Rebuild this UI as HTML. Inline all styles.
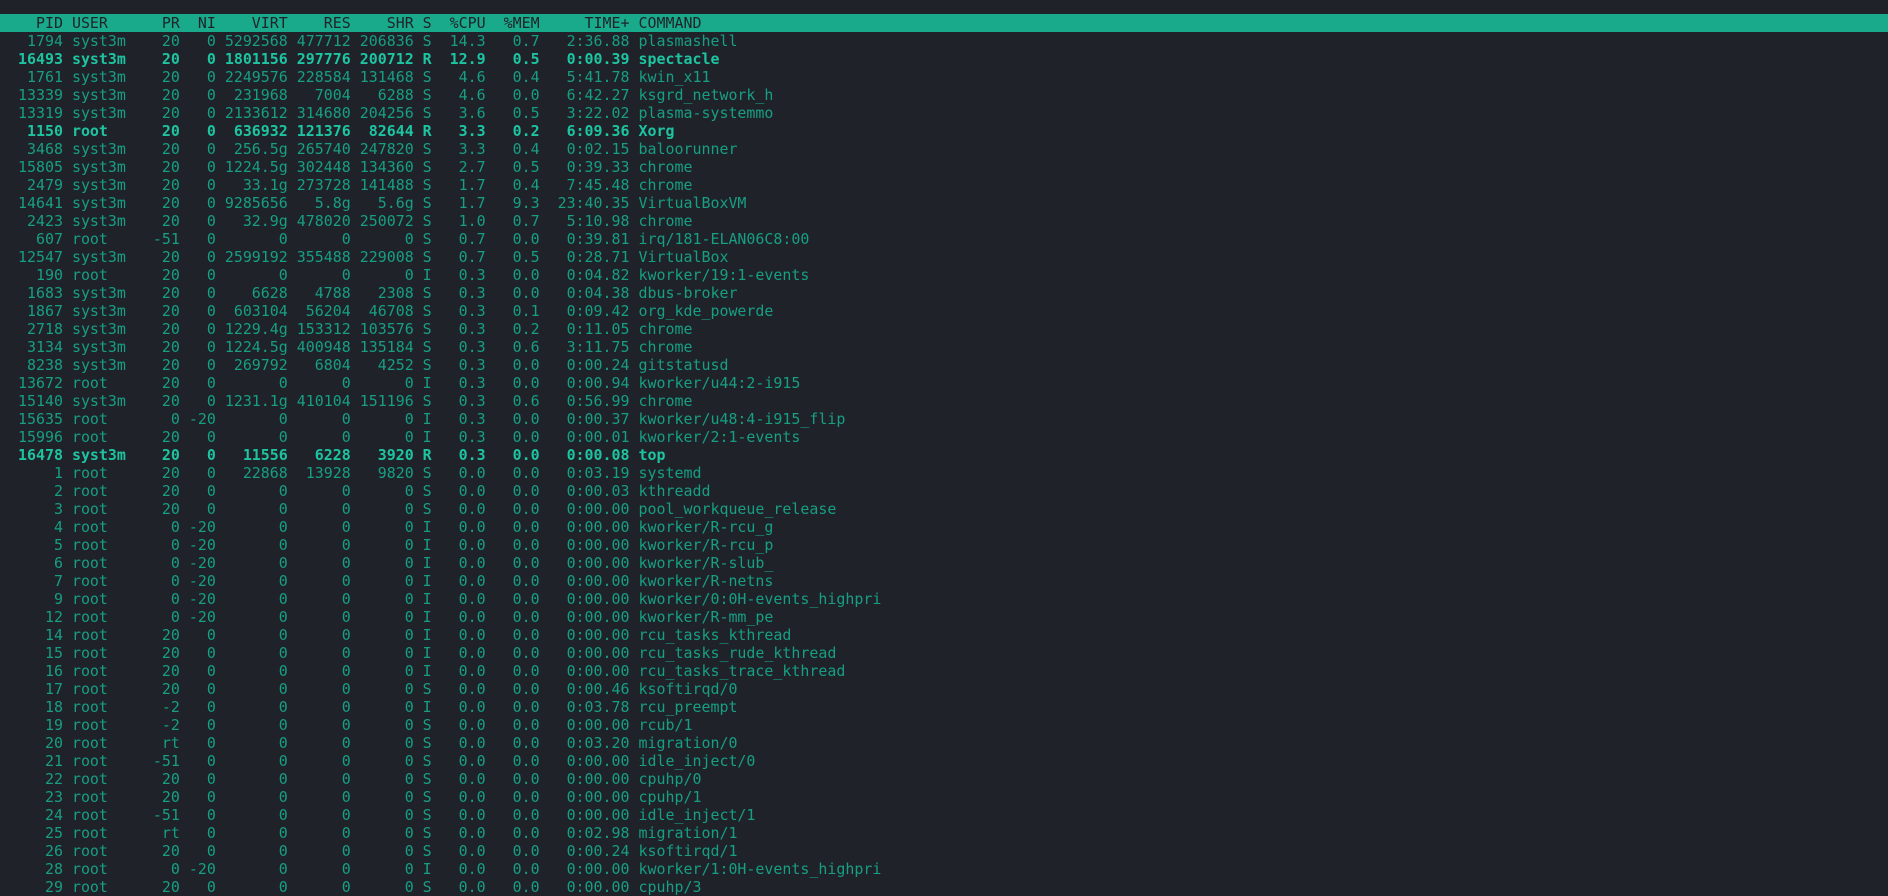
<!DOCTYPE html>
<html><head><meta charset="utf-8"><style>
html,body{margin:0;padding:0;background:#1f2329;width:1888px;height:893px;overflow:hidden}
pre{margin:0;position:absolute;left:0;top:14px;font-family:"DejaVu Sans Mono","Liberation Mono",monospace;font-size:14.94px;line-height:18px;color:#179e83;white-space:pre}
.h{background:#19a98b;color:#1f2329;display:block;width:1888px}
b{color:#1ec4a1;font-weight:bold}
</style></head><body><pre><span class="h">    PID USER      PR  NI    VIRT    RES    SHR S  %CPU  %MEM     TIME+ COMMAND</span>   1794 syst3m    20   0 5292568 477712 206836 S  14.3   0.7   2:36.88 plasmashell
<b>  16493 syst3m    20   0 1801156 297776 200712 R  12.9   0.5   0:00.39 spectacle</b>
   1761 syst3m    20   0 2249576 228584 131468 S   4.6   0.4   5:41.78 kwin_x11
  13339 syst3m    20   0  231968   7004   6288 S   4.6   0.0   6:42.27 ksgrd_network_h
  13319 syst3m    20   0 2133612 314680 204256 S   3.6   0.5   3:22.02 plasma-systemmo
<b>   1150 root      20   0  636932 121376  82644 R   3.3   0.2   6:09.36 Xorg</b>
   3468 syst3m    20   0  256.5g 265740 247820 S   3.3   0.4   0:02.15 baloorunner
  15805 syst3m    20   0 1224.5g 302448 134360 S   2.7   0.5   0:39.33 chrome
   2479 syst3m    20   0   33.1g 273728 141488 S   1.7   0.4   7:45.48 chrome
  14641 syst3m    20   0 9285656   5.8g   5.6g S   1.7   9.3  23:40.35 VirtualBoxVM
   2423 syst3m    20   0   32.9g 478020 250072 S   1.0   0.7   5:10.98 chrome
    607 root     -51   0       0      0      0 S   0.7   0.0   0:39.81 irq/181-ELAN06C8:00
  12547 syst3m    20   0 2599192 355488 229008 S   0.7   0.5   0:28.71 VirtualBox
    190 root      20   0       0      0      0 I   0.3   0.0   0:04.82 kworker/19:1-events
   1683 syst3m    20   0    6628   4788   2308 S   0.3   0.0   0:04.38 dbus-broker
   1867 syst3m    20   0  603104  56204  46708 S   0.3   0.1   0:09.42 org_kde_powerde
   2718 syst3m    20   0 1229.4g 153312 103576 S   0.3   0.2   0:11.05 chrome
   3134 syst3m    20   0 1224.5g 400948 135184 S   0.3   0.6   3:11.75 chrome
   8238 syst3m    20   0  269792   6804   4252 S   0.3   0.0   0:00.24 gitstatusd
  13672 root      20   0       0      0      0 I   0.3   0.0   0:00.94 kworker/u44:2-i915
  15140 syst3m    20   0 1231.1g 410104 151196 S   0.3   0.6   0:56.99 chrome
  15635 root       0 -20       0      0      0 I   0.3   0.0   0:00.37 kworker/u48:4-i915_flip
  15996 root      20   0       0      0      0 I   0.3   0.0   0:00.01 kworker/2:1-events
<b>  16478 syst3m    20   0   11556   6228   3920 R   0.3   0.0   0:00.08 top</b>
      1 root      20   0   22868  13928   9820 S   0.0   0.0   0:03.19 systemd
      2 root      20   0       0      0      0 S   0.0   0.0   0:00.03 kthreadd
      3 root      20   0       0      0      0 S   0.0   0.0   0:00.00 pool_workqueue_release
      4 root       0 -20       0      0      0 I   0.0   0.0   0:00.00 kworker/R-rcu_g
      5 root       0 -20       0      0      0 I   0.0   0.0   0:00.00 kworker/R-rcu_p
      6 root       0 -20       0      0      0 I   0.0   0.0   0:00.00 kworker/R-slub_
      7 root       0 -20       0      0      0 I   0.0   0.0   0:00.00 kworker/R-netns
      9 root       0 -20       0      0      0 I   0.0   0.0   0:00.00 kworker/0:0H-events_highpri
     12 root       0 -20       0      0      0 I   0.0   0.0   0:00.00 kworker/R-mm_pe
     14 root      20   0       0      0      0 I   0.0   0.0   0:00.00 rcu_tasks_kthread
     15 root      20   0       0      0      0 I   0.0   0.0   0:00.00 rcu_tasks_rude_kthread
     16 root      20   0       0      0      0 I   0.0   0.0   0:00.00 rcu_tasks_trace_kthread
     17 root      20   0       0      0      0 S   0.0   0.0   0:00.46 ksoftirqd/0
     18 root      -2   0       0      0      0 I   0.0   0.0   0:03.78 rcu_preempt
     19 root      -2   0       0      0      0 S   0.0   0.0   0:00.00 rcub/1
     20 root      rt   0       0      0      0 S   0.0   0.0   0:03.20 migration/0
     21 root     -51   0       0      0      0 S   0.0   0.0   0:00.00 idle_inject/0
     22 root      20   0       0      0      0 S   0.0   0.0   0:00.00 cpuhp/0
     23 root      20   0       0      0      0 S   0.0   0.0   0:00.00 cpuhp/1
     24 root     -51   0       0      0      0 S   0.0   0.0   0:00.00 idle_inject/1
     25 root      rt   0       0      0      0 S   0.0   0.0   0:02.98 migration/1
     26 root      20   0       0      0      0 S   0.0   0.0   0:00.24 ksoftirqd/1
     28 root       0 -20       0      0      0 I   0.0   0.0   0:00.00 kworker/1:0H-events_highpri
     29 root      20   0       0      0      0 S   0.0   0.0   0:00.00 cpuhp/3
</pre></body></html>
